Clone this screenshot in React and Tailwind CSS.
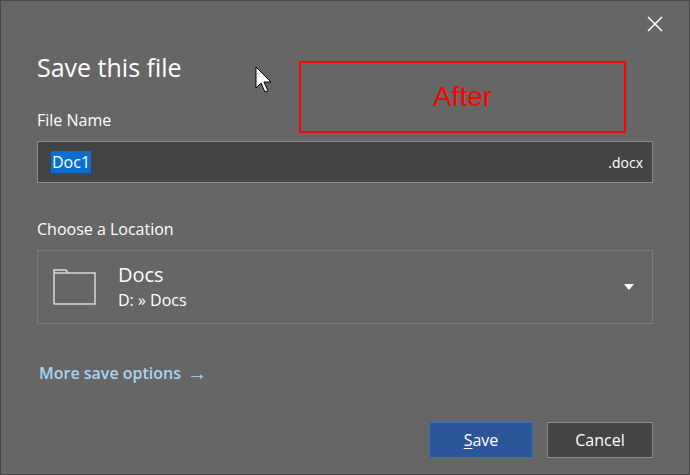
export default function App() {
  return (
    <div className="relative w-[690px] h-[475px] bg-[#666666] border border-[#474747] text-white overflow-hidden" style={{fontFamily: '"Open Sans", "Noto Sans", sans-serif'}}>
      <svg className="absolute left-[646px] top-[15px]" width="16" height="16" viewBox="0 0 16 16"><path d="M1 1L15 15M15 1L1 15" stroke="white" strokeWidth="1.5"/></svg>
      <div className="flex flex-col px-[36px] pt-[49px]">
        <div className="text-[25px] leading-[34px]">Save this file</div>
        <div className="mt-[25px] text-[16px] leading-[22px]">File Name</div>
        <div className="mt-[10px] h-[42px] bg-[#444444] border border-[#8a8a8a] flex items-center justify-between pl-[13px] pr-[9px] text-[16px]">
          <span className="bg-[#0a6fd1] px-[1px] leading-[22px]">Doc1</span>
          <span className="text-[14px]">.docx</span>
        </div>
        <div className="mt-[35px] text-[16px] leading-[22px]">Choose a Location</div>
        <div className="mt-[10px] h-[74px] border border-[#7c7c7c] flex items-center pl-[15px] pr-[18px]">
          <svg width="44" height="36" viewBox="0 0 44 36" fill="none" stroke="#d8d8d8" strokeWidth="1.5"><path d="M1 35V1H13L15 4H42V35Z M1 4H15"/></svg>
          <div className="ml-[21px] flex flex-col flex-1">
            <span className="text-[20px] leading-[27px]">Docs</span>
            <span className="text-[16px] leading-[25px]">D: » Docs</span>
          </div>
          <svg width="10" height="6" viewBox="0 0 10 6"><path d="M0 0H10L5 6Z" fill="white"/></svg>
        </div>
        <div className="mt-[37px] text-[16px] leading-[24px] font-semibold text-[#a8d4f5] pl-[2px] flex items-center gap-[6px]">More save options <span className="font-normal text-[20px] leading-[24px]">→</span></div>
        <div className="mt-[37px] flex justify-end gap-[14px]">
          <button className="w-[104px] h-[36px] bg-[#2b579a] border border-[#3a6db5] text-[16px]"><span className="underline underline-offset-2">S</span>ave</button>
          <button className="w-[106px] h-[36px] bg-[#444444] border border-[#8a8a8a] text-[16px]">Cancel</button>
        </div>
      </div>
      <div className="absolute left-[298px] top-[60px] w-[327px] h-[72px] border-2 border-[#ff0000] flex items-center justify-center text-[#ff0000] text-[28px]" style={{fontFamily: '"Liberation Sans", sans-serif'}}>After</div>
      <svg className="absolute left-[254px] top-[65px]" width="18" height="28" viewBox="0 0 18 28"><path d="M1 1V22L6 17L10 26L13 25L9 16H16Z" fill="white" stroke="black" strokeWidth="1"/></svg>
    </div>
  );
}
